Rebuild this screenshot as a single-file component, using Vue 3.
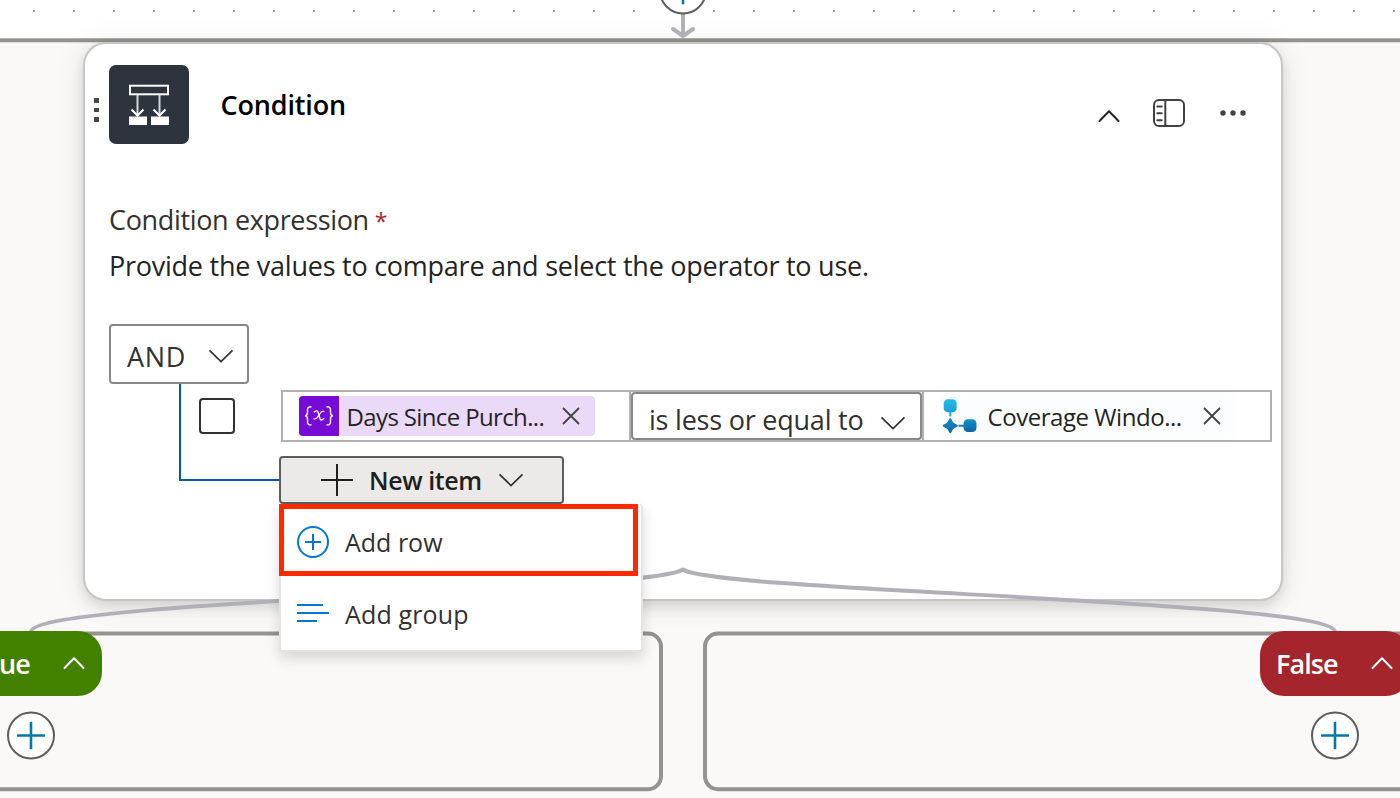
<script setup>
const dots = Array.from({ length: 36 }, (_, i) => -6 + i * 40)
const branches = [
  { id: 'yes', label: 'True' },
  { id: 'no', label: 'False' }
]
</script>

<template>
  <main class="canvas">
    <svg class="layer" viewBox="0 0 1400 798" width="1400" height="798">
      <rect v-for="x in dots" :key="x" :x="x - 1" y="10" width="2" height="2" fill="#999" />
      <rect x="-20" y="40.3" width="1440" height="800" fill="#faf9f8" stroke="#949390" stroke-width="4" />
    </svg>

    <section class="card">
      <header class="head">
        <div class="grip"><i></i><i></i><i></i></div>
        <div class="logo">
          <svg viewBox="0 0 80 80" width="80" height="80" fill="none" stroke="#fff" stroke-width="2">
            <rect x="21" y="20.7" width="38" height="8.6" />
            <path d="M28.5 29.5V49.5M50.5 29.5V49.5" stroke="#d6d8db" />
            <path d="M22.5 44.5l6 6 6-6M44.5 44.5l6 6 6-6" />
            <path d="M20 51.5h18v8.5H20zM42 51.5h18v8.5H42z" fill="#fff" stroke="none" />
          </svg>
        </div>
        <h1>Condition</h1>
        <div class="tools">
          <svg width="22" height="14" viewBox="0 0 22 14" class="up"><path d="M1.5 12 11 2.3 20.5 12" /></svg>
          <svg width="34" height="30" viewBox="0 0 34 30" class="panel">
            <rect x="2" y="2" width="30" height="26" rx="5" />
            <path d="M13.3 2v26M5.3 8.5h4.4M5.3 15.3h4.4M5.3 22.2h4.4" stroke-linecap="round" />
          </svg>
          <svg width="26" height="6" viewBox="0 0 26 6" fill="#424242">
            <circle cx="3" cy="3" r="2.7" /><circle cx="13" cy="3" r="2.7" /><circle cx="23" cy="3" r="2.7" />
          </svg>
        </div>
      </header>

      <div class="label">Condition expression<span class="star">*</span></div>
      <div class="hint">Provide the values to compare and select the operator to use.</div>

      <div class="group">
        <div class="select and">
          <span>AND</span>
          <svg class="chev" width="26" height="14" viewBox="0 0 26 14"><path d="M1.5 1.3 13 12.5 24.5 1.3" /></svg>
        </div>
        <div class="tree">
          <div class="rule">
            <div class="check"></div>
            <div class="fields">
              <div class="field first">
                <div class="chip violet">
                  <div class="fx">
                    <svg width="40" height="40" viewBox="0 0 40 40" fill="none" stroke="#fff" stroke-width="1.4" stroke-linecap="round">
                      <path d="M12 10.7c-3 0-3.5 1.2-3.5 3v2.8c0 2-.7 3-2.3 3.3 1.6.3 2.3 1.3 2.3 3.3v2.8c0 1.9.5 3 3.5 3" />
                      <path d="M28 10.7c3 0 3.5 1.2 3.5 3v2.8c0 2 .7 3 2.3 3.3-1.6.3-2.3 1.3-2.3 3.3v2.8c0 1.9-.5 3-3.5 3" />
                      <path d="M15.3 15.9c2.300-1.700 3.300-1.200 3.900.6l1.700 6c.6 1.900 1.900 2.100 3.900.1" />
                      <path d="M25 15.500c-1.600-.7-2.700.3-3.900 2l-2.300 3.400c-1.200 1.700-2.300 2.500-3.900 1.900" stroke-width="1.100" />
                    </svg>
                  </div>
                  <span class="t1">Days Since Purch...</span>
                  <svg class="x" width="18" height="18" viewBox="0 0 18 18"><path d="M1 1l16 16M17 1 1 17" /></svg>
                </div>
              </div>
              <div class="select op">
                <span>is less or equal to</span>
                <svg class="chev" width="26" height="14" viewBox="0 0 26 14"><path d="M1.5 1.3 13 12.5 24.5 1.3" /></svg>
              </div>
              <div class="field last">
                <div class="chip pale">
                  <svg class="flow" width="40" height="40" viewBox="0 0 40 40">
                    <defs>
                      <linearGradient id="sky" x1="0" y1="0" x2="0" y2="1"><stop offset="0" stop-color="#22bde8" /><stop offset="1" stop-color="#18a0d6" /></linearGradient>
                      <linearGradient id="sea" x1="0" y1="0" x2="0" y2="1"><stop offset="0" stop-color="#1390c8" /><stop offset="1" stop-color="#0a64a4" /></linearGradient>
                    </defs>
                    <path d="M10.3 16v4.5" stroke="#1ba7db" stroke-width="2" />
                    <path d="M18.5 29.7h6" stroke="#117fba" stroke-width="2" />
                    <rect x="3.7" y="3.3" width="13" height="13" rx="4.3" fill="url(#sky)" />
                    <rect x="23.5" y="23.3" width="13" height="12.7" rx="4.3" fill="url(#sea)" />
                    <path d="M10.3 22c1.3 0 1.6 2.9 3 4.4 1.5 1.4 4.6 2 4.6 3.3s-3.1 1.8-4.6 3.3c-1.4 1.4-1.7 4.2-3 4.2s-1.6-2.8-3-4.2c-1.5-1.5-4.6-2-4.6-3.3s3.1-1.9 4.6-3.3c1.4-1.5 1.7-4.4 3-4.4z" fill="url(#sea)" />
                  </svg>
                  <span class="t2">Coverage Windo...</span>
                  <svg class="x" width="18" height="18" viewBox="0 0 18 18"><path d="M1 1l16 16M17 1 1 17" /></svg>
                </div>
              </div>
            </div>
          </div>

          <div class="new">
            <button class="newbtn">
              <svg width="32" height="32" viewBox="0 0 32 32"><path d="M16 0v32M0 16h32" stroke="#201f1e" stroke-width="2" /></svg>
              <span>New item</span>
              <svg class="chev" width="26" height="14" viewBox="0 0 26 14"><path d="M1.5 1.3 13 12.5 24.5 1.3" /></svg>
            </button>
            <div class="menu">
              <div class="item marked">
                <svg width="34" height="34" viewBox="0 0 34 34"><circle cx="17" cy="17" r="15" /><path d="M17 9v16M9 17h16" /></svg>
                <span>Add row</span>
              </div>
              <div class="item second">
                <svg width="34" height="34" viewBox="0 0 34 34"><path d="M1 9h26M1 17h32M1 25h20" /></svg>
                <span>Add group</span>
              </div>
            </div>
          </div>
        </div>
      </div>
    </section>

    <svg class="layer front" viewBox="0 0 1400 798" width="1400" height="798" fill="none">
      <rect x="-599" y="633.5" width="1260" height="155.7" rx="13" fill="#faf9f8" stroke="#949390" stroke-width="4" />
      <rect x="705" y="633.5" width="1260" height="155.7" rx="13" fill="#faf9f8" stroke="#949390" stroke-width="4" />
      <path d="M31 632C31 600 651 592 683 569.500C715 592 1335 600 1335 632" stroke="#b1b0b8" stroke-width="4" stroke-linejoin="round" />
      <path d="M683 12V36M673 29l10 7 10-7" stroke="#b1b0b8" stroke-width="4" stroke-linecap="round" stroke-linejoin="round" />
    </svg>

    <div class="add top"><svg width="28" height="28" viewBox="0 0 28 28"><path d="M14 0v28M0 14h28" /></svg></div>
    <template v-for="b in branches" :key="b.id">
      <div class="pill" :class="b.id">
        <span>{{ b.label }}</span>
        <svg width="22" height="14" viewBox="0 0 22 14" class="up"><path d="M1.5 12 11 2.3 20.5 12" /></svg>
      </div>
      <div class="add" :class="b.id"><svg width="28" height="28" viewBox="0 0 28 28"><path d="M14 0v28M0 14h28" /></svg></div>
    </template>
  </main>
</template>

<style>
body { margin: 0; overflow: hidden; }
</style>

<style scoped>
.canvas {
  position: relative; width: 1400px; height: 798px; overflow: hidden; background: #fff;
  font-family: "Open Sans", "Noto Sans", sans-serif; font-size: 27px; color: #323130;
  white-space: nowrap;
}
.canvas *, .canvas *::before { box-sizing: border-box; }
svg { display: block; flex: none; }
.layer { position: absolute; left: 0; top: 0; }
.front { z-index: 1; pointer-events: none; }

.card {
  position: absolute; left: 83px; top: 42px; width: 1200px; height: 559px;
  border: 2px solid #c6c6c6; border-radius: 23px; background: #fff; background-clip: padding-box;
  padding: 21px 9px 0 9px;
  box-shadow: 0 6px 14px rgba(0, 0, 0, .13), 0 1px 34px rgba(0, 0, 0, .07);
}
.head { display: flex; height: 80px; }
.grip { width: 15px; padding: 33px 0 0 0; display: flex; flex-direction: column; gap: 5px; }
.grip i { width: 5px; height: 4.7px; background: #484644; }
.logo { width: 80px; height: 79px; border-radius: 7px; background: #2d343e; overflow: hidden; }
h1 { margin: 0 0 0 31.5px; font-size: 27px; font-weight: 600; line-height: 80px; color: #000; letter-spacing: -.15px; }
.tools { margin: 0 26px 0 auto; display: flex; align-items: center; padding-top: 15px; gap: 34px; }
.up { fill: none; stroke: #242424; stroke-width: 2; stroke-linecap: round; stroke-linejoin: round; }
.tools .up { margin-top: 7px; margin-right: -1.5px; }
.panel { fill: none; stroke: #424242; stroke-width: 2; }

.label, .hint { height: 46px; line-height: 46px; padding-left: 15px; }
.label { margin-top: 52px; letter-spacing: -.35px; }
.hint { color: #242424; letter-spacing: -.25px; }
.star { color: #a4262c; margin-left: 6px; font-size: 23px; }

.group { margin: 35px 0 0 15px; }
.select { display: flex; align-items: center; justify-content: space-between; border: 2px solid #8a8886; border-radius: 4px; background: #fff; }
.chev { fill: none; stroke: #323130; stroke-width: 1.7; }
.and { width: 140px; height: 60px; padding: 5px 13px 0 16px; letter-spacing: .7px; }
.and .chev { margin-top: -2px; }
.tree { position: relative; padding-left: 90px; }
.tree::before {
  content: ""; position: absolute; left: 70px; top: 0; width: 102px; height: 97px;
  border: solid #0058ad; border-width: 0 0 2px 2px;
}
.rule { position: relative; display: flex; padding-top: 6px; }
.check { margin-top: 8px; width: 36px; height: 36px; border: 2px solid #323130; border-radius: 4px; background: #fff; }
.fields { margin-left: 46px; width: 991px; height: 52px; display: flex; border: 2px solid #b0b0b0; background: #fff; }
.first { width: 348px; padding: 4px 0 0 16px; border-right: 2px solid #b0b0b0; }
.last { flex: 1; padding: 4px 0 0 16px; border-left: 2px solid #b0b0b0; }
.op { width: 291px; height: 48px; padding: 6px 14px 0 16px; letter-spacing: -.22px; }
.op .chev { margin-top: 7px; }
.chip { width: 296px; height: 40px; display: flex; align-items: center; border-radius: 4px; font-size: 24px; color: #242424; overflow: hidden; }
.chip .x { margin: 0 15px 0 auto; fill: none; stroke: #424242; stroke-width: 1.8; }
.violet { background: #ebdaf7; }
.pale { background: #fcfdff; }
.fx { width: 40px; height: 40px; background: #770bd6; }
.t1 { margin-left: 7.5px; letter-spacing: -.63px; padding-top: 1px; }
.t2 { margin-left: 7.5px; letter-spacing: -.45px; padding-top: 1px; }

.new { position: relative; margin: 14px 0 0 80px; width: 285px; }
.newbtn {
  width: 285px; height: 48px; display: flex; align-items: center; padding: 0 38.5px 0 40px; margin: 0;
  border: 2px solid #605e5c; border-radius: 4px; background: #ebeae8; color: #201f1e;
  font: 600 25px "Open Sans", "Noto Sans", sans-serif; letter-spacing: -.4px;
}
.newbtn span { margin: 0 auto 0 16px; }
.menu {
  position: absolute; z-index: 4; left: 0; top: 48px; width: 364px; height: 148px;
  border: 2px solid #e4e4e4; border-top-width: 0; border-radius: 4px; background: #fff;
  box-shadow: 0 6px 14px rgba(0, 0, 0, .15);
}
.item { height: 72px; display: flex; align-items: center; padding: 2px 0 0 15px; font-size: 25px; gap: 15px; letter-spacing: 0; }
.item svg { fill: none; stroke: #0078d4; stroke-width: 2; }
.marked { width: 359px; margin-left: -2px; border: 5px solid #ff2a00; padding: 4px 0 0 12px; }
.second { letter-spacing: .15px; }
.second span { padding-top: 2px; }

.pill {
  position: absolute; z-index: 2; top: 631px; height: 64.5px; border-radius: 24px;
  display: flex; align-items: center; justify-content: space-between; padding: 0 17px 0 16px;
  color: #fff; font-weight: 600; letter-spacing: -.9px;
}
.pill .up { stroke: #fff; }
.pill.yes { left: -40px; width: 142px; background: #428000; padding-left: 14px; }
.pill.no { left: 1260px; width: 150px; background: #a4262c; }
.add {
  position: absolute; z-index: 2; top: 711px; width: 48px; height: 48px; border: 2px solid #605e5c; border-radius: 50%;
  background: #fff; display: grid; place-items: center; transform: translateY(.5px);
}
.add svg { fill: none; stroke: #0078a8; stroke-width: 2.6; }
.add.yes { left: 7px; }
.add.no { left: 1311px; }
.add.top { left: 659px; top: -34.5px; }
</style>
